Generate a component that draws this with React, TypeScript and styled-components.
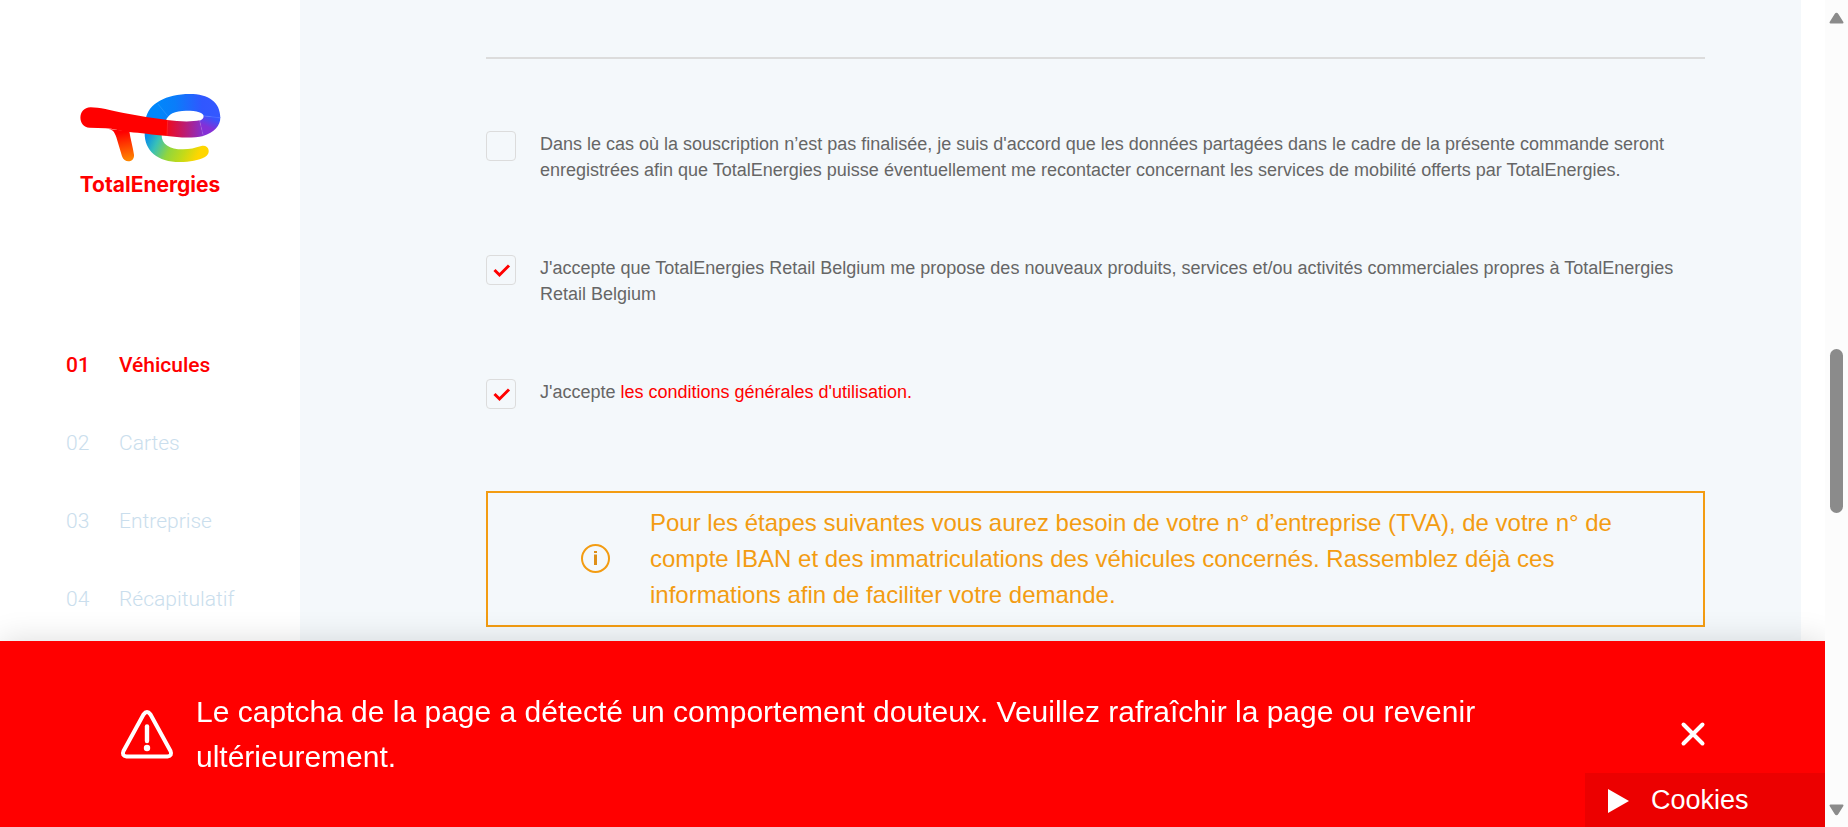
import React from "react";
import styled, { createGlobalStyle } from "styled-components";

const GlobalStyle = createGlobalStyle`
  *, *::before, *::after { box-sizing: border-box; }
  html, body { margin: 0; background: #fff; overflow: hidden; }
  body { font-family: "Liberation Sans", Arial, sans-serif; color: #666; }
`;

const Page = styled.div`
  display: flex;
  height: 100vh;
  overflow: hidden;
`;

const Sidebar = styled.aside`
  flex: 0 0 300px;
  padding-top: 94px;
  background: #fff;
`;

const Brand = styled.a`
  display: flex;
  flex-direction: column;
  align-items: center;
  gap: 10px;
  color: #f00;
  text-decoration: none;
`;

const Wordmark = styled.span`
  font: 700 21px/26px Inter, sans-serif;
`;

const Steps = styled.ol`
  display: flex;
  flex-direction: column;
  gap: 54px;
  margin: 155px 0 0;
  padding: 0 0 0 66px;
  list-style: none;
`;

const Step = styled.a<{ $active?: boolean }>`
  display: flex;
  font: ${(p) => (p.$active ? 500 : 300)} 21px/24px Roboto, sans-serif;
  color: ${(p) => (p.$active ? "#f00" : "#cadeed")};
  text-decoration: none;
`;

const StepNumber = styled.span`
  width: 53px;
`;

const Main = styled.main`
  flex: 1;
  min-width: 0;
  margin-right: 24px;
  padding: 57px 96px 0 186px;
  background: #f4f8fb;
`;

const Divider = styled.hr`
  height: 2px;
  margin: 0 0 72px;
  border: 0;
  background: #dcdcdc;
`;

const Consents = styled.form`
  display: flex;
  flex-direction: column;
  gap: 72px;
`;

const Consent = styled.div`
  display: flex;
  gap: 24px;
`;

const Checkbox = styled.input`
  appearance: none;
  flex: none;
  width: 30px;
  height: 30px;
  margin: 0;
  border: 1px solid #dcdcdc;
  border-radius: 4px;
`;

const BoxHolder = styled.span`
  display: grid;
  flex: none;
  width: 30px;
  height: 30px;
  > * { grid-area: 1 / 1; place-self: center; }
  svg { pointer-events: none; }
`;

const ConsentText = styled.label`
  font-size: 18px;
  line-height: 26px;
`;

const TermsLink = styled.a`
  color: #f00;
  text-decoration: none;
`;

const Notice = styled.section`
  display: flex;
  align-items: center;
  gap: 38px;
  margin-top: 82px;
  padding: 12px 80px 12px 92px;
  border: 2px solid #f39c12;
  color: #f39c12;
`;

const NoticeIcon = styled.svg`
  flex: none;
`;

const NoticeText = styled.p`
  margin: 0;
  font-size: 24px;
  line-height: 36px;
`;

const Banner = styled.div`
  position: fixed;
  right: 23px;
  bottom: 0;
  left: 0;
  display: flex;
  align-items: center;
  padding: 48px 116px;
  background: #f00;
  color: #fff;
  box-shadow: 0 0 30px rgba(0, 0, 0, 0.14);
`;

const BannerText = styled.p`
  flex: 1;
  margin: 0 120px 0 18px;
  font-size: 30px;
  line-height: 45px;
`;

const CloseButton = styled.button`
  display: flex;
  padding: 0;
  border: 0;
  background: none;
  color: inherit;
`;

const CookiesButton = styled.button`
  position: fixed;
  right: 23px;
  bottom: 0;
  display: flex;
  align-items: center;
  gap: 22px;
  width: 240px;
  height: 54px;
  padding: 0 23px;
  border: 0;
  background: #ec0000;
  color: #fff;
  font: 27px/32px "Liberation Sans", Arial, sans-serif;
`;

const Scrollbar = styled.div`
  position: relative;
  z-index: 2;
  display: flex;
  flex: 0 0 23px;
  flex-direction: column;
  align-items: center;
  justify-content: space-between;
  padding: 12px 0 11px;
  background: #fcfcfc;
`;

const Thumb = styled.div`
  position: absolute;
  top: 42%;
  left: 5px;
  width: 13px;
  height: 164px;
  margin-top: 2px;
  border-radius: 7px;
  background: #8b8b8b;
`;

function Logo() {
  return (
    <svg width="141" height="68" viewBox="59 42 423 204" aria-hidden="true">
      <defs>
        <linearGradient id="blue" gradientUnits="userSpaceOnUse" x1="290" y1="90" x2="470" y2="90">
          <stop offset="0" stopColor="#0087fb" />
          <stop offset=".3" stopColor="#0a7dfa" />
          <stop offset=".75" stopColor="#3057ff" />
          <stop offset="1" stopColor="#3458ff" />
        </linearGradient>
        <linearGradient id="violet" gradientUnits="userSpaceOnUse" x1="322" y1="150" x2="425" y2="150">
          <stop offset="0" stopColor="#ee0a20" />
          <stop offset=".5" stopColor="#bc1c72" />
          <stop offset="1" stopColor="#8630cc" />
        </linearGradient>
        <linearGradient id="turn" gradientUnits="userSpaceOnUse" x1="442" y1="142" x2="456" y2="112">
          <stop offset="0" stopColor="#8430d6" />
          <stop offset="1" stopColor="#3556ff" />
        </linearGradient>
        <linearGradient id="leg" gradientUnits="userSpaceOnUse" x1="190" y1="156" x2="205" y2="240">
          <stop offset="0" stopColor="#f00" />
          <stop offset="1" stopColor="#ff8500" />
        </linearGradient>
        <linearGradient id="tail" gradientUnits="userSpaceOnUse" x1="262" y1="160" x2="412" y2="230">
          <stop offset="0" stopColor="#078ce8" />
          <stop offset=".22" stopColor="#38c0b8" />
          <stop offset=".48" stopColor="#92d63c" />
          <stop offset=".75" stopColor="#c4da18" />
          <stop offset="1" stopColor="#ffd600" />
        </linearGradient>
      </defs>
      <path fill="url(#tail)" d="M253 158C252 212 292 246 358 246C390 246 414 241 434 231C455 219 444 192 423 198C403 204 389 208 368 208C327 208 303 192 304 164Z" />
      <path fill="url(#blue)" d="M256 118C264 70 318 42 388 42C444 42 480 66 480 113L430 109C430 98 411 92 377 92C344 92 322 102 316 124Z" />
      <path fill="url(#turn)" d="M480 112C480 138 462 158 428 168L418 122C426 119 430 115 430 108Z" />
      <path fill="url(#violet)" d="M320 120C355 125 395 126 418 121L429 168C398 175 355 173 320 168Z" />
      <path fill="url(#leg)" d="M138 146C158 148 162 154 168 172L185 229C192 251 223 248 221 224C218 202 210 177 207 154Z" />
      <path fill="#f00" d="M91 82C117 82 150 91 190 99C235 108 280 115 322 120L321 168C275 164 240 159 207 156C175 153 160 146 136 145L88 143C50 140 51 83 91 82Z" />
      <path fill="none" stroke="#fff" strokeWidth="1" opacity=".35" d="M293 72L322 108M322 120L320 168M418 122L429 168M430 107L480 114" />
    </svg>
  );
}

function Tick() {
  return (
    <svg width="30" height="30" viewBox="0 0 30 30" aria-hidden="true">
      <path d="M8.500 15L13.500 20L23 10.500" fill="none" stroke="#f00" strokeWidth="3" />
    </svg>
  );
}

function Arrow({ down = false }: { down?: boolean }) {
  return (
    <svg width="15" height="12" viewBox="0 0 15 12" aria-hidden="true">
      <path
        d={down ? "M1.500 1.500H13.500L8.500 9.500Q7.500 11 6.500 9.500Z" : "M1.500 10.500H13.500L8.500 2.500Q7.500 1 6.500 2.500Z"}
        fill="#8b8b8b"
        stroke="#8b8b8b"
        strokeWidth="2"
        strokeLinejoin="round"
      />
    </svg>
  );
}

const steps = ["Véhicules", "Cartes", "Entreprise", "Récapitulatif"];

const consents: { id: string; checked: boolean; text: React.ReactNode }[] = [
  {
    id: "contact",
    checked: false,
    text: "Dans le cas où la souscription n’est pas finalisée, je suis d'accord que les données partagées dans le cadre de la présente commande seront enregistrées afin que TotalEnergies puisse éventuellement me recontacter concernant les services de mobilité offerts par TotalEnergies.",
  },
  {
    id: "offers",
    checked: true,
    text: "J'accepte que TotalEnergies Retail Belgium me propose des nouveaux produits, services et/ou activités commerciales propres à TotalEnergies Retail Belgium",
  },
  {
    id: "terms",
    checked: true,
    text: (
      <>
        J'accepte <TermsLink href="#conditions">les conditions générales d'utilisation.</TermsLink>
      </>
    ),
  },
];

export default function App() {
  return (
    <>
      <GlobalStyle />
      <Page>
        <Sidebar>
          <Brand href="#">
            <Logo />
            <Wordmark>TotalEnergies</Wordmark>
          </Brand>
          <Steps>
            {steps.map((label, i) => (
              <li key={label}>
                <Step href={`#etape-${i + 1}`} $active={i === 0}>
                  <StepNumber>0{i + 1}</StepNumber>
                  {label}
                </Step>
              </li>
            ))}
          </Steps>
        </Sidebar>
        <Main>
          <Divider />
          <Consents>
            {consents.map((c) => (
              <Consent key={c.id}>
                <BoxHolder>
                  <Checkbox type="checkbox" id={c.id} defaultChecked={c.checked} />
                  {c.checked && <Tick />}
                </BoxHolder>
                <ConsentText htmlFor={c.id}>{c.text}</ConsentText>
              </Consent>
            ))}
          </Consents>
          <Notice>
            <NoticeIcon width="32" height="32" viewBox="0 0 32 32" aria-hidden="true">
              <circle cx="15.500" cy="15.500" r="13.500" fill="none" stroke="#f39c12" strokeWidth="2" />
              <path d="M14 8H17V10H14ZM14 11.500H17V22H14Z" fill="#de8f18" />
            </NoticeIcon>
            <NoticeText>
              Pour les étapes suivantes vous aurez besoin de votre n° d’entreprise (TVA), de votre n° de compte IBAN
              et des immatriculations des véhicules concernés. Rassemblez déjà ces informations afin de faciliter
              votre demande.
            </NoticeText>
          </Notice>
        </Main>
        <Scrollbar aria-hidden="true">
          <Arrow />
          <Thumb />
          <Arrow down />
        </Scrollbar>
      </Page>
      <Banner role="alert">
        <svg width="62" height="62" viewBox="0 0 62 62" fill="none" stroke="#fff" strokeLinecap="round" aria-hidden="true">
          <path
            d="M27.500 11.500Q31 6.500 34.500 11.500L54.500 48Q56.500 53 51.500 53.500H10.500Q5.500 53 7.500 48Z"
            strokeWidth="4"
            strokeLinejoin="round"
          />
          <path d="M31 23.500V38" strokeWidth="4.4" />
          <circle cx="31" cy="45" r="3.200" fill="#fff" stroke="none" />
        </svg>
        <BannerText>
          Le captcha de la page a détecté un comportement douteux. Veuillez rafraîchir la page ou revenir
          ultérieurement.
        </BannerText>
        <CloseButton type="button" aria-label="Fermer">
          <svg width="32" height="32" viewBox="0 0 32 32" stroke="#fff" strokeWidth="4" strokeLinecap="round" aria-hidden="true">
            <path d="M6.500 6.500L25.500 25.500M25.500 6.500L6.500 25.500" />
          </svg>
        </CloseButton>
      </Banner>
      <CookiesButton type="button">
        <svg width="21" height="26" viewBox="0 0 21 26" fill="#fff" aria-hidden="true">
          <path d="M0 2L21 14L0 26Z" />
        </svg>
        Cookies
      </CookiesButton>
    </>
  );
}
